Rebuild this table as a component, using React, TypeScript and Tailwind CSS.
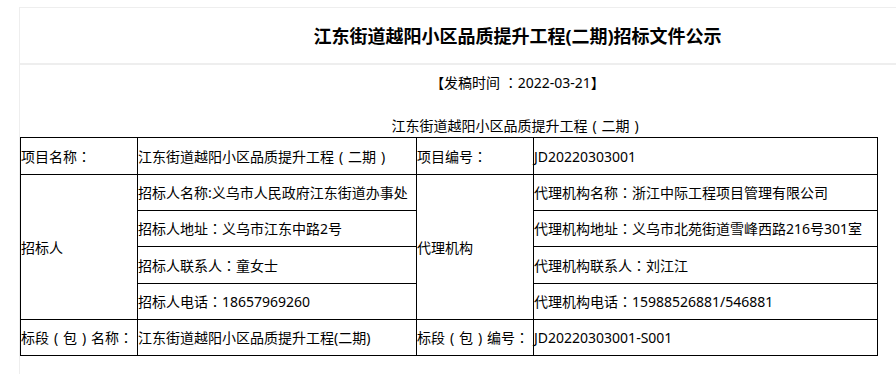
/**
 * Tender notice page: title, publish date and a bordered info table.
 */

const cell = 'border border-black p-0 align-middle text-left font-normal';

// Full-width punctuation sits centred in its em box in the reference,
// so colons take the TC glyph and brackets are centred half-width glyphs
function T({ children }: { children: string }) {
  const parts = children.split(/([：（）])/);
  return (
    <>
      {parts.map((part, i) => {
        if (part === '：') {
          return (
            <span key={i} style={{ fontFamily: '"Noto Sans CJK TC", sans-serif' }}>
              ：
            </span>
          );
        }
        if (part === '（' || part === '）') {
          return (
            <span key={i} className="inline-block w-[14px] text-center">
              {part === '（' ? '(' : ')'}
            </span>
          );
        }
        return <span key={i}>{part}</span>;
      })}
    </>
  );
}

export default function App() {
  return (
    <div
      className="w-[896px] h-[374px] overflow-hidden bg-white text-black text-[14px] [text-spacing-trim:space-all]"
      style={{ fontFamily: '"Noto Sans", "Noto Sans CJK SC", sans-serif' }}
    >
      <div className="ml-[19px] mt-[7px] w-[997px] h-[400px] border border-[#eeeeee]">
        {/* Title */}
        <div className="h-[57px] flex items-center justify-center border-b-2 border-[#eeeeee]">
          <h1 className="text-[18px] font-bold leading-none">
            江东街道越阳小区品质提升工程(二期)招标文件公示
          </h1>
        </div>

        {/* Publish date */}
        <p className="mt-[5px] text-center leading-[24px]">
          <T>【发稿时间 ：2022-03-21】</T>
        </p>

        {/* Subtitle */}
        <p className="mt-[19px] text-center leading-[23px]">
          <T>江东街道越阳小区品质提升工程（二期）</T>
        </p>

        <table className="border-collapse table-fixed w-[857px]">
          <colgroup>
            <col className="w-[117px]" />
            <col className="w-[279px]" />
            <col className="w-[117px]" />
            <col className="w-[344px]" />
          </colgroup>
          <tbody>
            <tr className="h-[37px]">
              <td className={cell}><T>项目名称：</T></td>
              <td className={cell}><T>江东街道越阳小区品质提升工程（二期）</T></td>
              <td className={cell}><T>项目编号：</T></td>
              <td className={cell}>JD20220303001</td>
            </tr>
            <tr className="h-[36px]">
              <td className={cell} rowSpan={4}>招标人</td>
              <td className={cell}>招标人名称:义乌市人民政府江东街道办事处</td>
              <td className={cell} rowSpan={4}>代理机构</td>
              <td className={cell}><T>代理机构名称：浙江中际工程项目管理有限公司</T></td>
            </tr>
            <tr className="h-[36px]">
              <td className={cell}><T>招标人地址：义乌市江东中路2号</T></td>
              <td className={cell}><T>代理机构地址：义乌市北苑街道雪峰西路216号301室</T></td>
            </tr>
            <tr className="h-[37px]">
              <td className={cell}><T>招标人联系人：童女士</T></td>
              <td className={cell}><T>代理机构联系人：刘江江</T></td>
            </tr>
            <tr className="h-[36px]">
              <td className={cell}><T>招标人电话：18657969260</T></td>
              <td className={cell}><T>代理机构电话：15988526881/546881</T></td>
            </tr>
            <tr className="h-[36px]">
              <td className={cell}><T>标段（包）名称：</T></td>
              <td className={cell}>江东街道越阳小区品质提升工程(二期)</td>
              <td className={cell}><T>标段（包）编号：</T></td>
              <td className={cell}>JD20220303001-S001</td>
            </tr>
          </tbody>
        </table>
      </div>
    </div>
  );
}
